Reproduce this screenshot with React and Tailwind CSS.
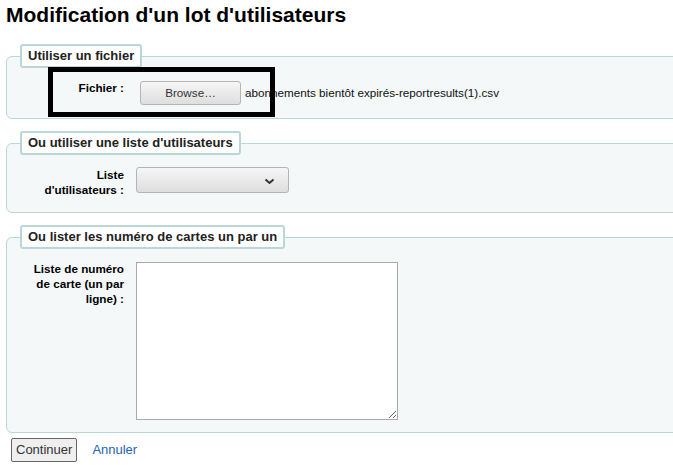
import React from 'react'

// Koha-style batch patron modification form
const fieldsetCls =
  'block min-w-0 ml-[6px] mr-[-30px] mb-[12px] border border-[#b9d7d9] rounded-[6px] bg-[#f4f8f9] pl-[13px] pt-0'
const legendCls =
  'h-[24px] px-[6px] border-2 border-[#b9d7d9] rounded-[3px] bg-white text-[13px] leading-[20px] font-bold text-[#222]'
const labelCls = 'w-[104px] shrink-0 text-right text-[11.7px] leading-[15px] font-bold text-black'

function Chevron() {
  return (
    <svg width="11" height="7" viewBox="0 0 11 7" className="absolute right-[13px] top-[10px]">
      <polyline points="1.5,1.5 5.5,5 9.5,1.5" fill="none" stroke="#333" strokeWidth="2" />
    </svg>
  )
}

export default function App() {
  return (
    <div
      className="relative w-[673px] h-[465px] overflow-hidden bg-white"
      style={{ fontFamily: '"Liberation Sans", Arial, sans-serif' }}
    >
      <h1 className="pl-[6px] pt-[2px] text-[21px] leading-[25px] font-bold text-black mb-[17px]">
        Modification d'un lot d'utilisateurs
      </h1>

      {/* Fichier */}
      <fieldset className={fieldsetCls}>
        <legend className={legendCls}>Utiliser un fichier</legend>
        <div className="flex items-start mt-[12px] pb-[13px]">
          <label className={labelCls}>Fichier :</label>
          <div className="ml-[16px] mt-[1px] flex items-center">
            <button className="w-[101px] h-[24px] border border-[#b4b4b4] rounded-[3px] bg-gradient-to-b from-[#f6f6f6] to-[#dedede] text-[11.7px] text-[#333]">
              Browse…
            </button>
            <span className="ml-[4px] text-[11.7px] text-[#111] whitespace-nowrap">
              abonnements bientôt expirés-reportresults(1).csv
            </span>
          </div>
        </div>
      </fieldset>

      {/* Liste */}
      <fieldset className={fieldsetCls}>
        <legend className={legendCls}>Ou utiliser une liste d'utilisateurs</legend>
        <div className="flex items-start mt-[12px] pb-[15px]">
          <label className={labelCls}>
            Liste
            <br />
            d'utilisateurs :
          </label>
          <div className="relative ml-[12px] w-[153px] h-[26px] border border-[#b4b4b4] rounded-[3px] bg-gradient-to-b from-[#f6f6f6] to-[#dedede]">
            <Chevron />
          </div>
        </div>
      </fieldset>

      {/* Numéros de cartes */}
      <fieldset className={fieldsetCls + ' !mb-[5px]'}>
        <legend className={legendCls}>Ou lister les numéro de cartes un par un</legend>
        <div className="flex items-start mt-[13px] pb-[12px]">
          <label className={labelCls + ' -mt-[1px]'}>
            Liste de numéro de carte (un par ligne) :
          </label>
          <textarea className="ml-[12px] w-[262px] h-[158px] border border-[#aaa] bg-white" />
        </div>
      </fieldset>

      <div className="flex items-center pl-[11px]">
        <button className="h-[24px] px-[4px] border border-[#666] rounded-[2px] bg-[#efefef] text-[13px] text-[#333]">
          Continuer
        </button>
        <a href="#" className="ml-[15px] text-[13px] text-[#1d64b5]">
          Annuler
        </a>
      </div>

      {/* annotation frame */}
      <div className="absolute left-[48px] top-[67px] w-[227px] h-[50px] border-[5px] border-black" />
    </div>
  )
}
